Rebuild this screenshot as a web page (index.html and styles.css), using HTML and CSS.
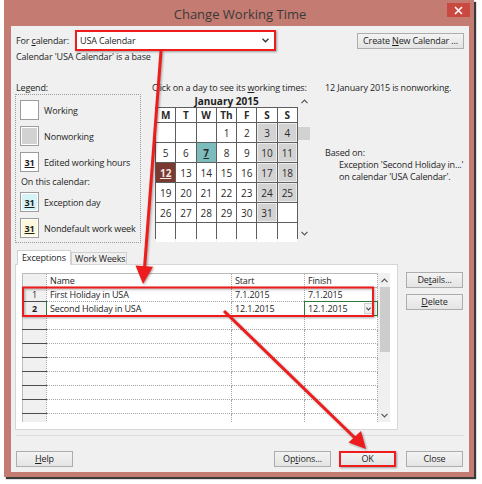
FILE: index.html
```html
<!DOCTYPE html>
<html>
<head>
<meta charset="utf-8">
<link rel="stylesheet" href="styles.css">
</head>
<body>
<div class="window">
  <div class="titlebar">
    <span class="title">Change Working Time</span>
    <span class="close"><svg width="9" height="9" viewBox="0 0 9 9"><path d="M1 1L8 8M8 1L1 8" stroke="#fff" stroke-width="1.6"/></svg></span>
  </div>
  <div class="client">
    <div class="row-top">
      <span class="for-label">For <u>c</u>alendar:</span>
      <div class="combo"><span>USA Calendar</span><svg class="chev" width="7" height="5" viewBox="0 0 7 5"><path d="M0.5 0.8L3.5 3.8L6.5 0.8" fill="none" stroke="#333" stroke-width="1.3"/></svg></div>
      <button class="btn btn-create">Create <u>N</u>ew Calendar ...</button>
    </div>
    <div class="base-note">Calendar 'USA Calendar' is a base</div>

    <div class="main">
      <div class="legend-col">
        <div class="sec-label">Legend:</div>
        <div class="legend-box">
          <div class="lg-item"><span class="sw sw-work"></span><span>Working</span></div>
          <div class="lg-item"><span class="sw sw-non"></span><span>Nonworking</span></div>
          <div class="lg-item"><span class="sw sw-edit">31</span><span>Edited working hours</span></div>
          <div class="lg-sub">On this calendar:</div>
          <div class="lg-item lg-after"><span class="sw sw-exc">31</span><span>Exception day</span></div>
          <div class="lg-item"><span class="sw sw-nd">31</span><span>Nondefault work week</span></div>
        </div>
      </div>

      <div class="cal-col">
        <div class="sec-label">Click on a day to see its <u>w</u>orking times:</div>
        <div class="cal-wrap">
          <div class="cal">
            <div class="month">January 2015</div>
            <div class="cal-grid">
              <div class="ch">M</div><div class="ch">T</div><div class="ch">W</div><div class="ch">Th</div><div class="ch">F</div><div class="ch">S</div><div class="ch">S</div>
              <div class="d"></div><div class="d"></div><div class="d"></div><div class="d">1</div><div class="d">2</div><div class="d we">3</div><div class="d we">4</div>
              <div class="d">5</div><div class="d">6</div><div class="d exc">7</div><div class="d">8</div><div class="d">9</div><div class="d we">10</div><div class="d we">11</div>
              <div class="d sel">12</div><div class="d">13</div><div class="d">14</div><div class="d">15</div><div class="d">16</div><div class="d we">17</div><div class="d we">18</div>
              <div class="d">19</div><div class="d">20</div><div class="d">21</div><div class="d">22</div><div class="d">23</div><div class="d we">24</div><div class="d we">25</div>
              <div class="d">26</div><div class="d">27</div><div class="d">28</div><div class="d">29</div><div class="d">30</div><div class="d we">31</div><div class="d"></div>
              <div class="d"></div><div class="d"></div><div class="d"></div><div class="d"></div><div class="d"></div><div class="d"></div><div class="d"></div>
            </div>
          </div>
          <div class="cal-scroll">
            <svg class="sarrow" width="7" height="5" viewBox="0 0 7 5"><path d="M0.5 4.2L3.5 1.2L6.5 4.2" fill="none" stroke="#555" stroke-width="1.2"/></svg>
            <div class="cal-thumb"></div>
            <div class="fill"></div>
            <svg class="sarrow" width="7" height="5" viewBox="0 0 7 5"><path d="M0.5 0.8L3.5 3.8L6.5 0.8" fill="none" stroke="#555" stroke-width="1.2"/></svg>
          </div>
        </div>
      </div>

      <div class="info-col">
        <div class="sec-label">12 January 2015 is nonworking.</div>
        <div class="based">Based on:</div>
        <div class="based-detail">
          <div>Exception 'Second Holiday in...'</div>
          <div>on calendar 'USA Calendar'.</div>
        </div>
      </div>
    </div>

    <div class="tabs-area">
      <div class="tabs-left">
        <div class="tabstrip">
          <div class="tab active">Exceptions</div>
          <div class="tab">Work Weeks</div>
        </div>
        <div class="tab-panel">
          <div class="grid">
            <table class="xt">
              <colgroup><col class="c-rh"><col class="c-name"><col class="c-date"><col class="c-date"></colgroup>
              <tr class="hdr"><td class="rh corner"></td><td>Name</td><td>Start</td><td>Finish</td></tr>
              <tr><td class="rh">1</td><td>First Holiday in USA</td><td>7.1.2015</td><td>7.1.2015</td></tr>
              <tr><td class="rh cur">2</td><td class="name-cur">Second Holiday in USA</td><td>12.1.2015</td><td class="edit"><div class="edit-in"><span>12.1.2015</span><span class="dd"><svg width="5" height="4" viewBox="0 0 5 4"><path d="M0.4 0.6L2.5 3L4.6 0.6" fill="none" stroke="#444" stroke-width="1.1"/></svg></span></div></td></tr>
              <tr><td class="rh"></td><td></td><td></td><td></td></tr>
              <tr><td class="rh"></td><td></td><td></td><td></td></tr>
              <tr><td class="rh"></td><td></td><td></td><td></td></tr>
              <tr><td class="rh"></td><td></td><td></td><td></td></tr>
              <tr><td class="rh"></td><td></td><td></td><td></td></tr>
              <tr><td class="rh"></td><td></td><td></td><td></td></tr>
              <tr><td class="rh"></td><td></td><td></td><td></td></tr>
              <tr><td class="rh"></td><td></td><td></td><td></td></tr>
            </table>
            <div class="gscroll">
              <div class="gs-up"><svg width="7" height="5" viewBox="0 0 7 5"><path d="M0.5 4.2L3.5 1.2L6.5 4.2" fill="none" stroke="#555" stroke-width="1.2"/></svg></div>
              <div class="gs-thumb"></div>
              <div class="fill"></div>
              <div class="gs-down"><svg width="7" height="5" viewBox="0 0 7 5"><path d="M0.5 0.8L3.5 3.8L6.5 0.8" fill="none" stroke="#555" stroke-width="1.2"/></svg></div>
            </div>
          </div>
        </div>
      </div>
      <div class="side-buttons">
        <button class="btn btn-side">De<u>t</u>ails...</button>
        <button class="btn btn-side"><u>D</u>elete</button>
      </div>
    </div>

    <div class="separator"></div>

    <div class="bottom-buttons">
      <button class="btn btn-b"><u>H</u>elp</button>
      <div class="spacer"></div>
      <button class="btn btn-b">Op<u>t</u>ions...</button>
      <button class="btn btn-b btn-ok">OK</button>
      <button class="btn btn-b btn-close">Close</button>
    </div>
  </div>
</div>

<svg class="annot" width="482" height="484" viewBox="0 0 482 484">
  <g class="shadowed">
    <rect x="23" y="287.5" width="350" height="28.5" fill="none" stroke="#ee1c1c" stroke-width="2"/>
    <line x1="161" y1="51" x2="144.5" y2="268" stroke="#ee1c1c" stroke-width="3"/>
    <polygon points="143,284 135.5,265.5 153,266.8" fill="#ee1c1c"/>
    <line x1="224" y1="311" x2="355" y2="438" stroke="#ee1c1c" stroke-width="3"/>
    <polygon points="366,449 348.5,442.5 361,431" fill="#ee1c1c"/>
  </g>
</svg>
</body>
</html>
```

FILE: styles.css
```css
* { box-sizing: border-box; }
html, body { margin: 0; padding: 0; }
body {
  width: 482px;
  height: 484px;
  background: #fff;
  font-family: "Open Sans", "Noto Sans", sans-serif;
  font-size: 9px;
  letter-spacing: -0.15px;
  color: #1e1e1e;
  position: relative;
  overflow: hidden;
}
u { text-decoration: underline; text-underline-offset: 1px; }

.window {
  margin-left: 4px;
  width: 470px;
  height: 477px;
  background: #c47b71;
  padding: 0 5px 5px 7px;
  box-shadow: 2px 2px 1px #3a3a3a;
  display: flex;
  flex-direction: column;
}
.titlebar {
  height: 26px;
  flex: none;
  display: grid;
  grid-template-columns: 1fr auto 1fr;
  align-items: start;
}
.title {
  grid-column: 2;
  font-size: 13px;
  letter-spacing: 0;
  line-height: 28px;
  color: #3a3a3a;
}
.close {
  grid-column: 3;
  justify-self: end;
  width: 23px;
  height: 14px;
  margin-top: 3px;
  margin-right: -1px;
  background: #c9483f;
  display: flex;
  align-items: center;
  justify-content: center;
}

.client {
  flex: 1;
  background: #f0f0f0;
  padding: 4px 5px 0 4px;
  display: flex;
  flex-direction: column;
}

.row-top {
  height: 21px;
  display: flex;
  align-items: center;
}
.for-label {
  width: 60px;
  padding-left: 1px;
  white-space: nowrap;
}
.combo {
  width: 201px;
  height: 21px;
  border: 2px solid #ee1c1c;
  background: #fff;
  box-shadow: 1px 1px 2px rgba(0,0,0,0.35);
  display: flex;
  align-items: center;
  justify-content: space-between;
  padding: 0 5px 0 3px;
}
.chev { display: block; }

.btn {
  font-family: inherit;
  font-size: 9px;
  letter-spacing: -0.15px;
  color: #1e1e1e;
  height: 16px;
  padding: 0;
  border: 1px solid #adadad;
  background: linear-gradient(#f3f3f3, #e4e4e4);
  line-height: 14px;
  text-align: center;
  white-space: nowrap;
  flex: none;
}
.btn-create {
  margin-left: auto;
  width: 107px;
}

.base-note {
  line-height: 12px;
  padding-left: 1px;
}

.main {
  margin-top: 19px;
  display: flex;
  align-items: flex-start;
}
.sec-label {
  line-height: 12px;
  white-space: nowrap;
}
.legend-col {
  width: 126px;
  flex: none;
}
.legend-col .sec-label { padding-left: 1px; }
.legend-box {
  height: 149px;
  border: 1px dotted #9a9a9a;
  padding: 5px 0 0 4px;
  display: flex;
  flex-direction: column;
}
.lg-item {
  display: flex;
  align-items: center;
  height: 20px;
  gap: 5px;
  margin-bottom: 6px;
  white-space: nowrap;
}
.lg-sub {
  line-height: 12px;
  margin-top: -2px;
  padding-left: 1px;
}
.lg-after { margin-top: 4px; }
.sw {
  width: 19px;
  height: 20px;
  border: 1px solid #9c9c9c;
  box-shadow: inset 0 0 0 1px #fff;
  font-weight: bold;
  font-size: 9px;
  text-decoration: underline;
  display: flex;
  align-items: center;
  justify-content: center;
  flex: none;
}
.sw-work { background: #fff; }
.sw-non { background: #d2d2d2; }
.sw-edit { background: #fff; }
.sw-exc { background: #d6f3f6; }
.sw-nd { background: #fcf8dc; }

.cal-col {
  margin-left: 11px;
  width: 159px;
  flex: none;
}
.cal-wrap {
  display: flex;
  margin-top: 1px;
  padding-left: 3px;
}
.cal { width: 143px; }
.month {
  text-align: center;
  font-weight: bold;
  font-size: 10px;
  letter-spacing: 0;
  line-height: 12px;
}
.cal-grid {
  display: grid;
  grid-template-columns: repeat(7, 1fr);
  grid-template-rows: 14px repeat(6, 19px);
  gap: 1px;
  background: #5e5e5e;
  border: 1px solid #5e5e5e;
  height: 132px;
}
.ch, .d {
  background: #fff;
  display: flex;
  align-items: center;
  justify-content: center;
  font-size: 10px;
  letter-spacing: 0;
  color: #2a2a2a;
}
.ch { font-weight: bold; }
.d.we { background: #d3d3d3; box-shadow: inset 0 0 0 1px #ececec; }
.d.exc { background: #7dbcbc; font-weight: bold; text-decoration: underline; }
.d.sel { background: #7a3a31; color: #f4e8e6; font-weight: bold; text-decoration: underline; }

.cal-scroll {
  width: 13px;
  height: 144px;
  display: flex;
  flex-direction: column;
  align-items: center;
  padding: 4px 0 3px;
}
.sarrow { display: block; flex: none; }
.cal-thumb {
  width: 12px;
  height: 13px;
  margin-top: 23px;
  background: #d2d2d2;
  align-self: flex-start;
}
.fill { flex: 1; }

.info-col {
  margin-left: 14px;
  flex: 1;
  white-space: nowrap;
}
.based {
  margin-top: 53px;
  line-height: 12px;
}
.based-detail {
  padding-left: 14px;
  line-height: 12px;
}

.tabs-area {
  margin-top: 7px;
  display: flex;
  align-items: flex-start;
}
.tabs-left { width: 383px; flex: none; }
.tabstrip {
  height: 14px;
  display: flex;
  align-items: flex-end;
  padding-left: 2px;
  position: relative;
  z-index: 1;
}
.tab {
  height: 12px;
  line-height: 11px;
  padding: 0 0 0 3px;
  border: 1px solid #d0d0d0;
  border-bottom: none;
  background: #f0f0f0;
  width: 56px;
  white-space: nowrap;
}
.tab.active {
  width: 54px;
  height: 15px;
  margin-bottom: -1px;
  background: #fff;
  padding-left: 4px;
  line-height: 13px;
}
.tab-panel {
  height: 166px;
  border: 1px solid #d6d6d6;
  background: #fff;
  padding: 8px 6px 6px 6px;
}
.grid {
  display: flex;
  height: 149px;
  overflow: hidden;
  width: 368px;
}
.xt {
  width: 355px;
  border-collapse: collapse;
  table-layout: fixed;
  flex: none;
  align-self: flex-start;
}
.c-rh { width: 24px; }
.c-name { width: 185px; }
.c-date { width: 73px; }
.xt tr { height: 14px; }
.xt td {
  padding: 0 0 0 3px;
  border: 1px dotted #a6a6a6;
  line-height: 12px;
  white-space: nowrap;
  overflow: hidden;
  font-size: 9px;
}
.xt .hdr td { border-bottom: 1px solid #b9b9b9; border-top: 1px solid #b9b9b9; }
.xt td.rh {
  background: #f0f0f0;
  text-align: center;
  padding: 0;
  border-bottom: 1px solid #4d4d4d;
  border-left: 1px solid #bdbdbd;
}
.xt td.corner { border-bottom: 1px solid #b9b9b9; }
.xt td.cur { font-weight: bold; }
.xt td.name-cur { border-left: 1px solid #2d7a3a; }
.xt td.edit { border: 1px solid #2d7a3a; padding: 0 0 0 3px; }
.edit-in { display: flex; justify-content: space-between; align-items: center; }
.dd {
  width: 9px;
  height: 11px;
  margin-right: 4px;
  background: #f0f0f0;
  border: 1px solid #cfcfcf;
  display: flex;
  align-items: center;
  justify-content: center;
}
.dd svg { display: block; }

.gscroll {
  width: 13px;
  height: 149px;
  background: #f0f0f0;
  display: flex;
  flex-direction: column;
  flex: none;
}
.gs-up, .gs-down {
  height: 14px;
  display: flex;
  align-items: center;
  justify-content: center;
  flex: none;
}
.gs-up svg, .gs-down svg { display: block; }
.gs-thumb {
  height: 65px;
  margin-left: 2px;
  width: 11px;
  background: #cdcdcd;
  flex: none;
}

.side-buttons {
  margin-left: 8px;
  margin-top: 22px;
  display: flex;
  flex-direction: column;
  gap: 6px;
}
.btn-side { width: 57px; }

.separator {
  margin-top: 5px;
  height: 1px;
  background: #dcdcdc;
  margin-left: 1px;
}

.bottom-buttons {
  margin-top: 15px;
  display: flex;
  align-items: center;
  padding-left: 1px;
}
.spacer { flex: 1; }
.btn-b { width: 57px; }
.btn-ok {
  margin-left: 8px;
  border: 2px solid #ee1c1c;
  box-shadow: 1px 1px 2px rgba(0,0,0,0.35);
  line-height: 12px;
}
.btn-close { margin-left: 10px; margin-right: 1px; }

.annot {
  position: absolute;
  left: 0;
  top: 0;
  pointer-events: none;
}
.shadowed { filter: drop-shadow(1px 1px 1px rgba(0,0,0,0.35)); }
```
